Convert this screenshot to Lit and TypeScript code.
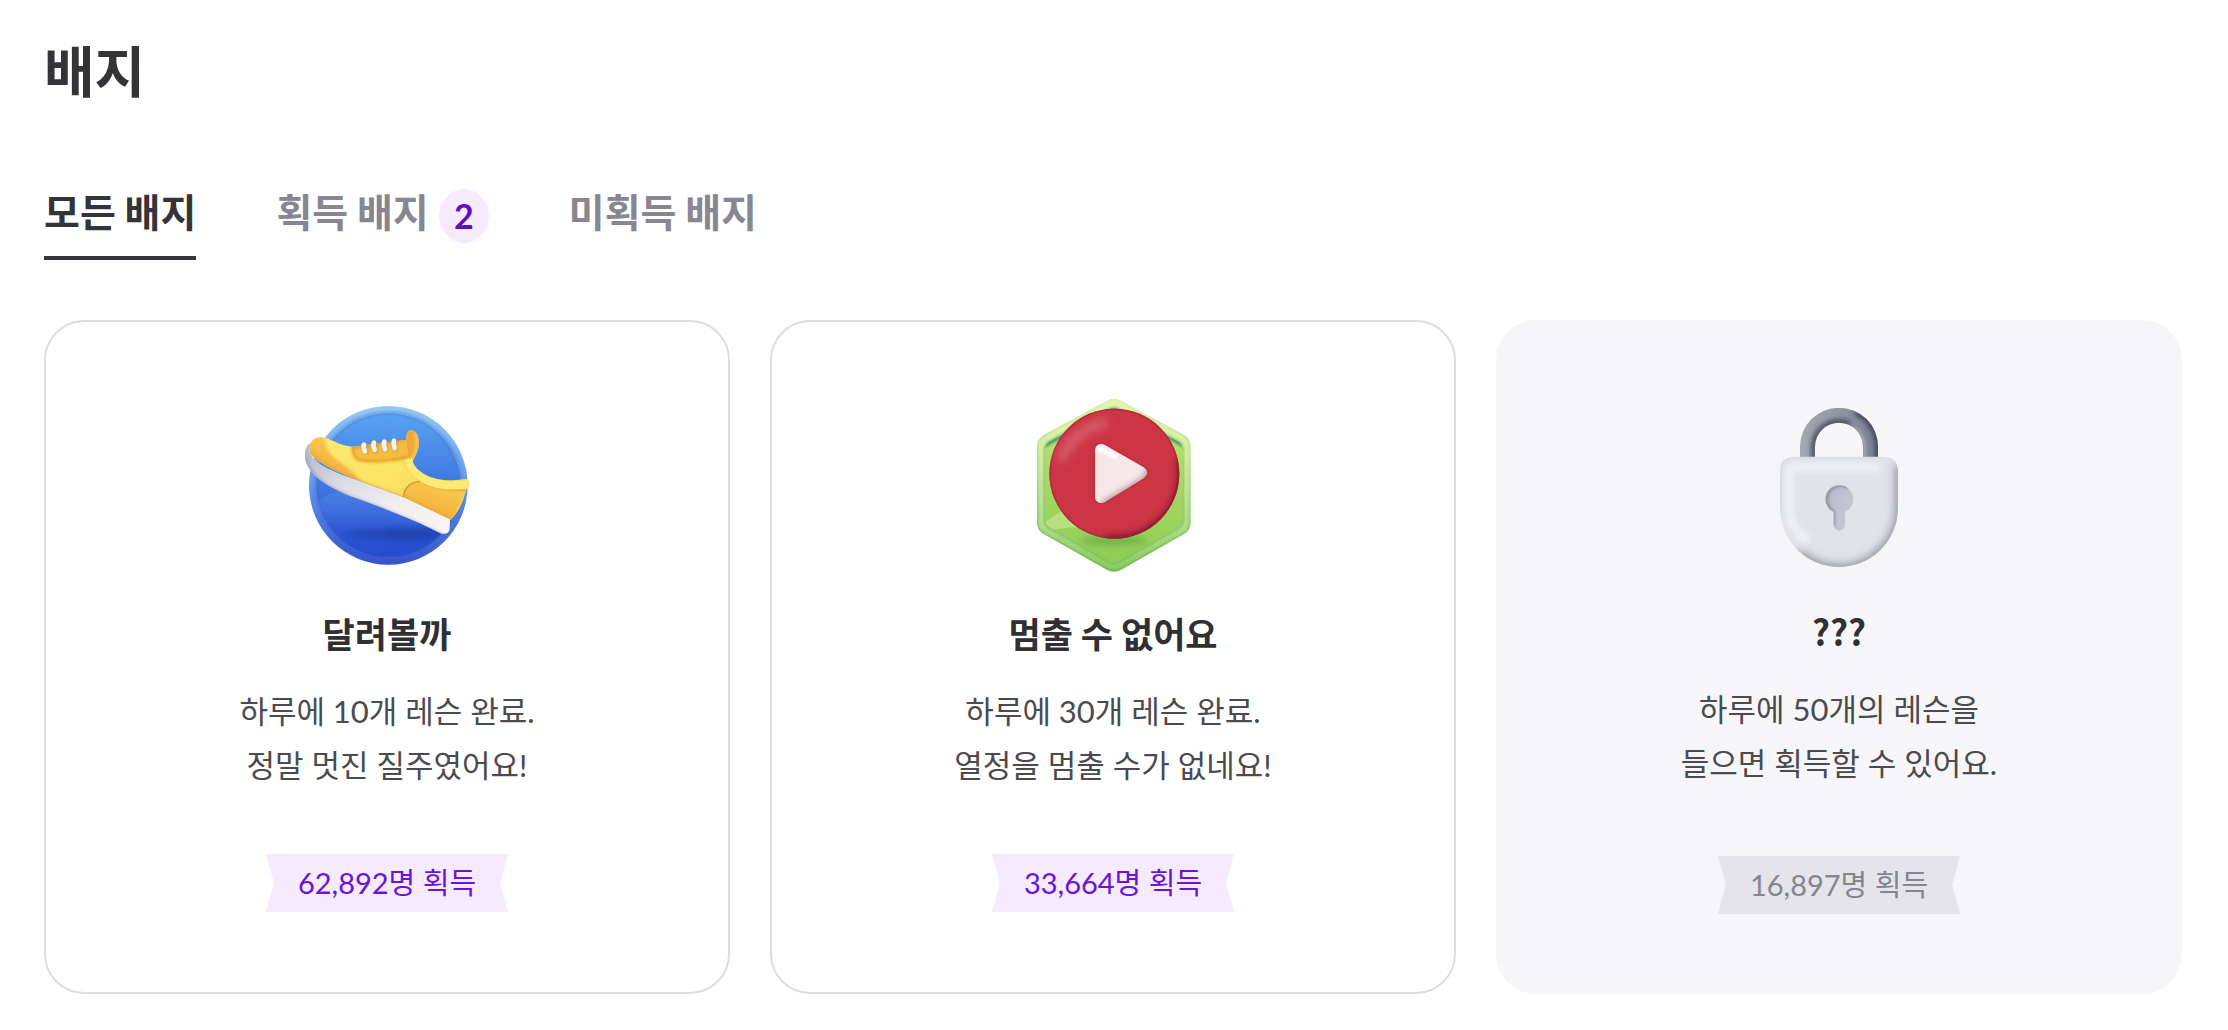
import { LitElement, html, css, svg } from "lit";
import { customElement, property, state } from "lit/decorators.js";
import { classMap } from "lit/directives/class-map.js";

interface Badge {
  icon: "shoe" | "play" | "lock";
  title: string;
  lines: string[];
  count: string;
  earned: boolean;
}

const BADGES: Badge[] = [
  { icon: "shoe", title: "달려볼까", lines: ["하루에 10개 레슨 완료.", "정말 멋진 질주였어요!"], count: "62,892명 획득", earned: true },
  { icon: "play", title: "멈출 수 없어요", lines: ["하루에 30개 레슨 완료.", "열정을 멈출 수가 없네요!"], count: "33,664명 획득", earned: true },
  { icon: "lock", title: "???", lines: ["하루에 50개의 레슨을", "들으면 획득할 수 있어요."], count: "16,897명 획득", earned: false },
];

const UPPER =
  "M59 190C54 160 70 141 92 141C122 143 145 168 188 170L350 149C346 132 354 120 364 120C380 122 388 142 386 166C384 190 372 202 368 216C382 250 430 273 490 271L528 267C542 270 542 296 528 301C522 330 506 366 483 389L340 321L215 275C150 250 90 225 59 190Z";
const SOLE =
  "M62 158C45 168 42 190 47 212C58 256 110 288 180 318C270 350 370 388 448 428C462 436 478 430 479 416L480 387C430 360 380 338 340 321L215 275C140 248 70 225 60 185Z";
const HEX =
  "M276 32Q297 20 318 32L506 134Q527 146 527 170V398Q527 420 508 431L318 539Q297 551 276 539L85 431Q66 420 66 398V170Q66 146 87 134Z";
const HEX_INNER =
  "M282 58Q297 50 312 58L490 155Q503 163 503 180V390Q503 404 492 411L310 515Q297 523 284 515L101 411Q90 404 90 390V180Q90 163 103 155Z";
const LOCK = "M165 200H430Q474 200 474 245V354A177 177 0 0 1 120 354V245Q120 200 165 200Z";
const TRIANGLE = "M240 182C240 164 256 158 270 165L386 232Q407 247 386 265L270 336C256 343 240 336 240 320Z";

const shoe = svg`
  <svg viewBox="-9 0 600 570" aria-hidden="true">
    <defs>
      <linearGradient id="rim" x1="0" y1="0" x2="0" y2="1"><stop offset="0" stop-color="#95c9f5"/><stop offset=".45" stop-color="#679eec"/><stop offset="1" stop-color="#3652cd"/></linearGradient>
      <linearGradient id="face" x1="0" y1="0" x2="0" y2="1"><stop offset="0" stop-color="#58a4f2"/><stop offset=".5" stop-color="#3f76e0"/><stop offset="1" stop-color="#2549d0"/></linearGradient>
      <linearGradient id="glint" x1="0" y1="0" x2="0" y2="1"><stop offset="0" stop-color="#6fa4f2" stop-opacity=".3"/><stop offset="1" stop-color="#6fa4f2" stop-opacity="0"/></linearGradient>
      <linearGradient id="yellow" x1="0" y1="0" x2="1" y2="1"><stop offset="0" stop-color="#fde774"/><stop offset=".5" stop-color="#fbe563"/><stop offset="1" stop-color="#f6cf52"/></linearGradient>
      <linearGradient id="orange" x1=".8" y1="0" x2=".3" y2="1"><stop offset="0" stop-color="#fbd056"/><stop offset="1" stop-color="#f2a737"/></linearGradient>
      <linearGradient id="sole" x1="0" y1="0" x2="1" y2="1"><stop offset="0" stop-color="#b1b3c8"/><stop offset=".35" stop-color="#dcdce4"/><stop offset=".65" stop-color="#f1eeee"/><stop offset="1" stop-color="#faf6f2"/></linearGradient>
      <clipPath id="upperClip"><path d=${UPPER}/></clipPath>
      <clipPath id="soleClip"><path d=${SOLE}/></clipPath>
      <clipPath id="faceClip"><circle cx="295" cy="286" r="216"/></clipPath>
      <filter id="b4" x="-30%" y="-30%" width="160%" height="160%"><feGaussianBlur stdDeviation="4"/></filter>
      <filter id="b10" x="-30%" y="-80%" width="160%" height="260%"><feGaussianBlur stdDeviation="11"/></filter>
    </defs>
    <circle cx="295" cy="286" r="238" fill="url(#rim)"/>
    <circle cx="295" cy="286" r="216" fill="url(#face)"/>
    <g clip-path="url(#faceClip)">
      <path d="M79 335Q150 290 210 285L420 380V420H79Z" fill="url(#glint)"/>
      <ellipse cx="320" cy="432" rx="160" ry="18" fill="#1f3da0" opacity=".6" filter="url(#b10)"/>
      <ellipse cx="370" cy="432" rx="80" ry="12" fill="#1f3da0" opacity=".5" filter="url(#b10)"/>
    </g>
    <circle cx="295" cy="286" r="218" fill="none" stroke="#2f5fc4" stroke-opacity=".55" stroke-width="6" filter="url(#b4)"/>
    <path d=${SOLE} fill="url(#sole)"/>
    <g clip-path="url(#soleClip)"><path d="M45 200C60 275 150 310 215 334C310 368 400 408 460 437" fill="none" stroke="#8b8ea9" stroke-opacity=".6" stroke-width="10" filter="url(#b4)"/></g>
    <path d=${UPPER} fill="url(#yellow)"/>
    <g clip-path="url(#upperClip)">
      <path d="M50 145Q105 125 108 160C112 205 172 220 216 276L160 270L50 205Z" fill="url(#orange)" filter="url(#b4)"/>
      <path d="M340 323C342 285 370 270 400 274C440 290 490 302 530 299L485 392Z" fill="url(#orange)"/>
      <path d="M340 322C342 290 366 274 392 275" fill="none" stroke="#d99627" stroke-width="4"/>
      <path d="M187 170L350 148L354 202C320 212 240 220 204 211Q184 196 187 170Z" fill="#f7bd43"/>
      <path d="M187 170Q187 204 207 211C250 220 318 211 356 200" fill="none" stroke="#df971f" stroke-width="6" filter="url(#b4)"/>
      <path d="M187 172L350 149" stroke="#d99320" stroke-width="6" filter="url(#b4)"/>
      <path d="M350 149C345 130 354 118 366 119C382 122 390 145 387 168C384 190 370 205 367 216L353 200Z" fill="#f0a63a"/>
      <path d="M375 130Q390 165 367 207" fill="none" stroke="#fbd164" stroke-width="8" filter="url(#b4)"/>
      <path d="M346 204C354 244 400 284 456 293Q502 301 534 298" fill="none" stroke="#d9a12c" stroke-width="7" filter="url(#b4)"/>
      <path d="M354 207C365 255 420 286 486 286L540 284" fill="none" stroke="#fbeb75" stroke-width="25"/>
      <path d="M60 188C92 226 150 252 215 276L340 322L483 390" fill="none" stroke="#da8d20" stroke-opacity=".6" stroke-width="6" filter="url(#b4)"/>
    </g>
    <g fill="none" stroke-linecap="round">
      <path d="M224 166Q219 172 228 185M254 160Q250 168 256 181M284 157Q280 166 286 179M313 154Q310 163 315 176" stroke="#b57b24" stroke-opacity=".6" stroke-width="15" filter="url(#b4)"/>
      <path d="M222 164Q218 171 225 184M252 158Q248 167 254 179M283 155Q279 165 285 178M312 152Q309 162 314 174" stroke="#f5f3f2" stroke-width="14"/>
    </g>
  </svg>`;

const play = svg`
  <svg viewBox="-6 0 600 570" aria-hidden="true">
    <defs>
      <linearGradient id="hexRim" x1="0" y1="0" x2="0" y2="1"><stop offset="0" stop-color="#e6f4b4"/><stop offset=".3" stop-color="#d6eda0"/><stop offset=".7" stop-color="#b4de88"/><stop offset="1" stop-color="#8acb5e"/></linearGradient>
      <linearGradient id="hexFace" x1="0" y1="0" x2="0" y2="1"><stop offset="0" stop-color="#bfe372"/><stop offset="1" stop-color="#8fcd55"/></linearGradient>
      <linearGradient id="hexEdge" x1="0" y1="0" x2="0" y2="1"><stop offset="0" stop-color="#a6cf90" stop-opacity=".3"/><stop offset="1" stop-color="#5cae4c"/></linearGradient>
      <clipPath id="hexClip"><path d=${HEX}/></clipPath>
      <clipPath id="hexInnerClip"><path d=${HEX_INNER}/></clipPath>
      <clipPath id="redClip"><circle cx="298" cy="251" r="195"/></clipPath>
      <clipPath id="triClip"><path d=${TRIANGLE}/></clipPath>
      <filter id="p3" x="-30%" y="-30%" width="160%" height="160%"><feGaussianBlur stdDeviation="3"/></filter>
      <filter id="p8" x="-40%" y="-60%" width="180%" height="220%"><feGaussianBlur stdDeviation="9"/></filter>
      <filter id="p14" x="-40%" y="-40%" width="180%" height="180%"><feGaussianBlur stdDeviation="13"/></filter>
    </defs>
    <path d=${HEX} fill="url(#hexRim)"/>
    <g clip-path="url(#hexClip)">
      <path d=${HEX} fill="none" stroke="url(#hexEdge)" stroke-width="7" filter="url(#p3)"/>
      <path d=${HEX_INNER} fill="none" stroke="#5fb062" stroke-opacity=".8" stroke-width="6" filter="url(#p3)"/>
    </g>
    <path d=${HEX_INNER} fill="url(#hexFace)"/>
    <g clip-path="url(#hexInnerClip)">
      <path d="M90 396L200 325V410Q150 412 104 420Z" fill="#dcf0ae" opacity=".45"/>
      <path d="M88 166L285 52Q297 46 309 52L506 166" fill="none" stroke="#4a9c6c" stroke-width="14" filter="url(#p3)"/>
      <ellipse cx="296" cy="452" rx="100" ry="16" fill="#5a9a3c" opacity=".5" filter="url(#p8)"/>
    </g>
    <circle cx="298" cy="251" r="195" fill="#cd3545"/>
    <g clip-path="url(#redClip)">
      <path d="M499 210A199 199 0 0 1 270 450" fill="none" stroke="#551321" stroke-opacity=".85" stroke-width="26" filter="url(#p14)"/>
      <circle cx="298" cy="251" r="197" fill="none" stroke="#7a1a2a" stroke-opacity=".8" stroke-width="7" filter="url(#p3)"/>
      <path d="M142 200Q170 128 262 100" fill="none" stroke="#da7080" stroke-opacity=".6" stroke-width="34" stroke-linecap="round" filter="url(#p14)"/>
    </g>
    <path d=${TRIANGLE} fill="#8b1626" opacity=".55" filter="url(#p3)"/>
    <path d=${TRIANGLE} fill="#f6e7e8"/>
    <g clip-path="url(#triClip)">
      <path d="M262 346L396 266Q407 250 396 236" fill="none" stroke="#9a7d83" stroke-width="16" filter="url(#p8)"/>
      <path d="M252 175L300 200" stroke="#fff" stroke-width="14" stroke-linecap="round" filter="url(#p3)"/>
    </g>
  </svg>`;

const lock = svg`
  <svg viewBox="-3 -6 600 570" aria-hidden="true">
    <defs>
      <linearGradient id="shackle" x1="0" y1="0" x2="1" y2="0"><stop offset="0" stop-color="#a5abb3"/><stop offset=".5" stop-color="#9297a1"/><stop offset="1" stop-color="#7a8090"/></linearGradient>
      <linearGradient id="hole" x1="0" y1="0" x2="1" y2="1"><stop offset="0" stop-color="#b5b5c4"/><stop offset=".5" stop-color="#c3c3d0"/><stop offset="1" stop-color="#c8c7d4"/></linearGradient>
      <clipPath id="shackleClip"><path d="M180 202V170A117 117 0 0 1 414 170V202H369V170A72 72 0 0 0 225 170V202Z"/></clipPath>
      <clipPath id="bodyClip"><path d=${LOCK}/></clipPath>
      <clipPath id="holeClip"><path d="M281 366A42 42 0 1 1 315 366V405A17 17 0 0 1 281 405Z"/></clipPath>
      <filter id="l4" x="-30%" y="-30%" width="160%" height="160%"><feGaussianBlur stdDeviation="4"/></filter>
      <filter id="l9" x="-30%" y="-30%" width="160%" height="160%"><feGaussianBlur stdDeviation="8"/></filter>
      <filter id="l16" x="-30%" y="-30%" width="160%" height="160%"><feGaussianBlur stdDeviation="14"/></filter>
    </defs>
    <g clip-path="url(#shackleClip)">
      <rect x="170" y="45" width="250" height="165" fill="url(#shackle)"/>
      <path d="M222 210V170A75 75 0 0 1 330 103" fill="none" stroke="#454a5e" stroke-width="17" filter="url(#l9)"/>
      <path d="M345 65A117 117 0 0 1 414 170V210" fill="none" stroke="#41475b" stroke-width="19" filter="url(#l9)"/>
      <path d="M345 115A72 72 0 0 1 374 170V200" fill="none" stroke="#a6abb4" stroke-width="8" filter="url(#l4)"/>
    </g>
    <path d=${LOCK} fill="#e2e3e9"/>
    <g clip-path="url(#bodyClip)">
      <path d="M420 232H165Q146 235 146 265V354Q152 420 205 455" fill="none" stroke="#ebeff4" stroke-width="28" filter="url(#l9)"/>
      <path d="M478 225V354A181 181 0 0 1 175 489" fill="none" stroke="#757884" stroke-opacity=".9" stroke-width="22" filter="url(#l16)"/>
      <path d="M120 370V245Q120 200 165 200H430" fill="none" stroke="#d9d9e2" stroke-width="9" filter="url(#l4)"/>
    </g>
    <g clip-path="url(#holeClip)">
      <rect x="250" y="280" width="95" height="145" fill="url(#hole)"/>
      <path d="M325 292A42 42 0 1 0 281 366V408" fill="none" stroke="#85869a" stroke-width="8" filter="url(#l4)"/>
    </g>
  </svg>`;

const ICONS = { shoe, play, lock };

@customElement("badge-card")
export class BadgeCard extends LitElement {
  @property({ attribute: false }) badge!: Badge;

  static styles = css`
    :host { display: grid; }
    .card {
      box-sizing: border-box;
      display: flex;
      flex-direction: column;
      align-items: center;
      padding: 68px 24px 80px;
      border: 2px solid #dcdce3;
      border-radius: 40px;
      text-align: center;
    }
    .card.locked { border: 0; background: #f6f6f9; }
    svg { display: block; width: 200px; height: 190px; }
    .title {
      margin: 26px 0 0;
      font-size: 35px;
      line-height: 54px;
      font-weight: 700;
      color: #303033;
    }
    .description {
      margin: 24px 0 62px;
      font-family: Lato, "Noto Sans CJK KR", sans-serif;
      font-size: 31px;
      line-height: 54px;
      color: #4a4a4f;
    }
    .line { display: block; }
    .ribbon {
      margin: auto 0 0;
      padding: 0 32px;
      font-family: Lato, "Noto Sans CJK KR", sans-serif;
      font-size: 29px;
      line-height: 58px;
      color: #6a14d9;
      background: #f5eafe;
      clip-path: polygon(0 0, 100% 0, calc(100% - 8px) 50%, 100% 100%, 0 100%, 8px 50%);
    }
    .locked .ribbon { color: #858590; background: #e4e4ea; }
  `;

  render() {
    const b = this.badge;
    return html`
      <article class=${classMap({ card: true, locked: !b.earned })}>
        ${ICONS[b.icon]}
        <h2 class="title">${b.title}</h2>
        <p class="description">${b.lines.map((l) => html`<span class="line">${l}</span>`)}</p>
        <p class="ribbon">${b.count}</p>
      </article>`;
  }
}

@customElement("app-root")
export class AppRoot extends LitElement {
  @state() private filter = "all";

  static styles = css`
    :host {
      display: block;
      font-family: "Noto Sans CJK KR", sans-serif;
      background: #fff;
    }
    .page { padding: 28px 46px 36px 44px; }
    .heading {
      margin: 0;
      font-size: 55px;
      line-height: 80px;
      font-weight: 700;
      color: #343338;
    }
    .tabs { display: flex; gap: 80px; margin: 72px 0 60px; }
    .tab {
      display: flex;
      align-items: center;
      gap: 10px;
      height: 80px;
      padding: 0 0 16px;
      border: 0;
      border-bottom: 4px solid transparent;
      background: none;
      font: inherit;
      font-size: 39px;
      line-height: 60px;
      font-weight: 700;
      color: #878691;
      cursor: pointer;
    }
    .tab.active { color: #343338; border-color: #343338; }
    .count {
      width: 50px;
      margin-top: 12px;
      border-radius: 50%;
      background: #f5eafe;
      font-family: Lato, sans-serif;
      font-size: 34px;
      line-height: 54px;
      color: #5f0fbe;
    }
    .cards { display: grid; grid-template-columns: repeat(3, 1fr); gap: 40px; }
  `;

  private tab(id: string, label: string, count?: number) {
    return html`
      <button
        type="button"
        role="tab"
        aria-selected=${this.filter === id}
        class=${classMap({ tab: true, active: this.filter === id })}
        @click=${() => (this.filter = id)}
      ><span>${label}</span>${count ? html`<span class="count">${count}</span>` : null}</button>`;
  }

  render() {
    const shown = BADGES.filter((b) => this.filter === "all" || b.earned === (this.filter === "earned"));
    return html`
      <main class="page">
        <h1 class="heading">배지</h1>
        <div class="tabs" role="tablist">
          ${this.tab("all", "모든 배지")}
          ${this.tab("earned", "획득 배지", BADGES.filter((b) => b.earned).length)}
          ${this.tab("missing", "미획득 배지")}
        </div>
        <section class="cards">${shown.map((b) => html`<badge-card .badge=${b}></badge-card>`)}</section>
      </main>`;
  }
}
